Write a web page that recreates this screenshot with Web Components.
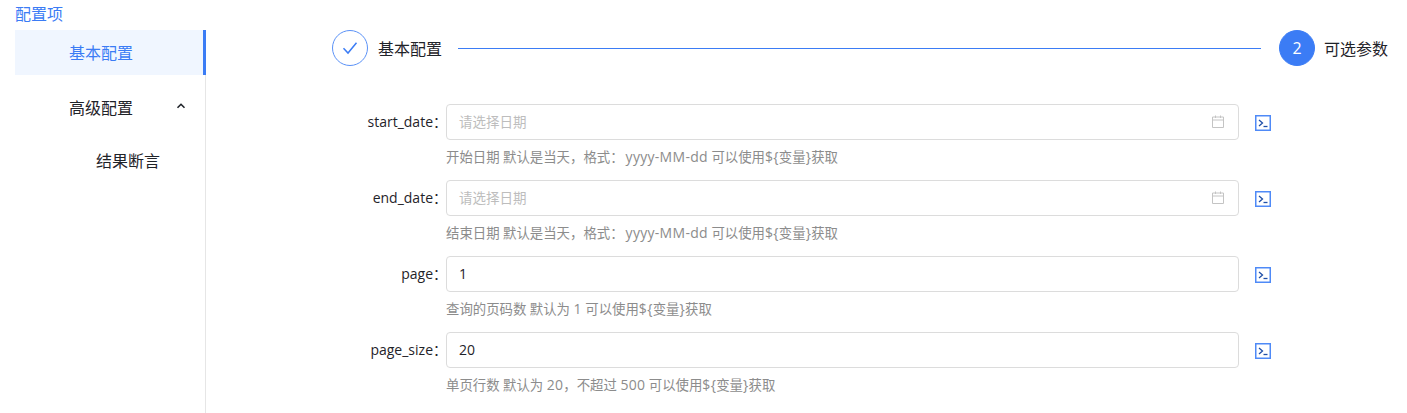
<!DOCTYPE html>
<html lang="zh">
<head>
<meta charset="utf-8">
<title>配置项</title>
<style>
    html, body {
        margin: 0;
        height: 100%;
        background: #fff;
        font-family: "Open Sans", "Noto Sans CJK SC", sans-serif;
        font-size: 14px;
        color: #1f2329;
        overflow: hidden;
    }
</style>
</head>
<body>
<x-config-page>
    <x-side-menu slot="side" heading="配置项">
        <x-menu-item active>基本配置</x-menu-item>
        <x-menu-item arrow>高级配置</x-menu-item>
        <x-menu-item sub>结果断言</x-menu-item>
    </x-side-menu>
    <x-steps>
        <x-step state="done">基本配置</x-step>
        <x-step num="2">可选参数</x-step>
    </x-steps>
    <x-field label="start_date" placeholder="请选择日期" date>开始日期 默认是当天，格式：<span class="gap">yyyy-MM-dd</span> 可以使用<span>${</span>变量<span>}</span>获取</x-field>
    <x-field label="end_date" placeholder="请选择日期" date>结束日期 默认是当天，格式：<span class="gap">yyyy-MM-dd</span> 可以使用<span>${</span>变量<span>}</span>获取</x-field>
    <x-field label="page" value="1">查询的页码数 默认为 <span>1</span> 可以使用<span>${</span>变量<span>}</span>获取</x-field>
    <x-field label="page_size" value="20">单页行数 默认为 <span>20</span>，不超过 <span>500</span> 可以使用<span>${</span>变量<span>}</span>获取</x-field>
</x-config-page>

<script>
const BLUE = '#3b7cf5';

class ConfigPage extends HTMLElement {
    constructor() {
        super();
        this.attachShadow({mode: 'open'});
        this.shadowRoot.innerHTML = `
            <style>
                :host {
                    display: flex;
                    height: 413px;
                    overflow: hidden;
                }

                .side {
                    flex: 0 0 206px;
                }

                .main {
                    flex: 1;
                    min-width: 0;
                    padding: 30px 19px 0 126px;
                }
            </style>
            <div class="side"><slot name="side"></slot></div>
            <div class="main"><slot></slot></div>
        `;
    }
}

class SideMenu extends HTMLElement {
    constructor() {
        super();
        this.attachShadow({mode: 'open'});
        this.shadowRoot.innerHTML = `
            <style>
                :host {
                    display: block;
                    padding-left: 15px;
                }

                h2 {
                    margin: 0;
                    height: 30px;
                    padding-top: 3px;
                    box-sizing: border-box;
                    font-size: 16px;
                    font-weight: 400;
                    line-height: 22px;
                    color: ${BLUE};
                }

                .list {
                    height: 383px;
                    border-right: 1px solid #e6e6e6;
                }
            </style>
            <h2></h2>
            <div class="list"><slot></slot></div>
        `;
        this.shadowRoot.querySelector('h2').textContent = this.getAttribute('heading');
    }
}

class MenuItem extends HTMLElement {
    constructor() {
        super();
        this.attachShadow({mode: 'open'});
        this.shadowRoot.innerHTML = `
            <style>
                :host {
                    display: flex;
                    align-items: center;
                    position: relative;
                    height: 45px;
                    margin-bottom: 8px;
                    padding-left: 54px;
                    color: #1f2329;
                    font-size: 16px;
                    line-height: 22px;
                }

                :host([active]) {
                    background: #f0f6ff;
                    color: ${BLUE};
                    margin-right: -1px;
                    margin-bottom: 10px;
                    box-shadow: inset -3px 0 0 ${BLUE};
                }

                :host([sub]) {
                    padding-left: 81px;
                }

                svg {
                    display: none;
                    position: absolute;
                    left: 161px;
                    top: 17px;
                }

                :host([arrow]) svg {
                    display: block;
                }
            </style>
            <slot></slot>
            <svg width="10" height="8" viewBox="0 0 10 8" fill="none" stroke="#1f2329" stroke-width="1.6">
                <path d="M1.5 5.8 L5 2.3 L8.5 5.8"/>
            </svg>
        `;
    }
}

class Steps extends HTMLElement {
    constructor() {
        super();
        this.attachShadow({mode: 'open'});
        this.shadowRoot.innerHTML = `
            <style>
                :host {
                    display: flex;
                    align-items: center;
                    height: 36px;
                    margin-bottom: 38px;
                }

                .line {
                    flex: 1;
                    height: 1px;
                    margin: 0 18px 0 16px;
                    background: ${BLUE};
                }
            </style>
            <slot name="first"></slot>
            <div class="line"></div>
            <slot name="last"></slot>
        `;
        const [first, last] = this.children;
        first.slot = 'first';
        last.slot = 'last';
    }
}

class Step extends HTMLElement {
    constructor() {
        super();
        this.attachShadow({mode: 'open'});
        const done = this.getAttribute('state') === 'done';
        const num = this.getAttribute('num') || '';
        this.shadowRoot.innerHTML = `
            <style>
                :host {
                    display: flex;
                    align-items: center;
                    color: #1f2329;
                    font-size: 16px;
                }

                .dot {
                    display: flex;
                    align-items: center;
                    justify-content: center;
                    width: 36px;
                    height: 36px;
                    box-sizing: border-box;
                    border-radius: 50%;
                    border: 1px solid ${done ? '#5b92f7' : BLUE};
                    margin-right: ${done ? 10 : 9}px;
                    color: #fff;
                    background: ${done ? '#fff' : BLUE};
                    font-size: 16px;
                }
            </style>
            <span class="dot">${done ? `
                <svg width="16" height="14" viewBox="0 0 16 14" fill="none" stroke="${BLUE}" stroke-width="1.500">
                    <path d="M1.5 7.2 L6 12 L14.5 1.8"/>
                </svg>` : num}</span>
            <slot></slot>
        `;
    }
}

class Field extends HTMLElement {
    constructor() {
        super();
        this.attachShadow({mode: 'open'});
        const placeholder = this.getAttribute('placeholder');
        this.shadowRoot.innerHTML = `
            <style>
                :host {
                    display: grid;
                    grid-template-columns: 114px 793px auto;
                    align-content: start;
                    height: 76px;
                }

                label {
                    height: 36px;
                    line-height: 36px;
                    text-align: right;
                    margin-right: -1px;
                    font-size: 14px;
                    color: #1f2329;
                    white-space: nowrap;
                }

                .box {
                    display: flex;
                    align-items: center;
                    justify-content: space-between;
                    height: 36px;
                    box-sizing: border-box;
                    padding: 0 14px 2px 12px;
                    border: 1px solid #dcdcdc;
                    border-radius: 4px;
                    background: #fff;
                    font-size: 14px;
                    color: #1f2329;
                }

                .placeholder {
                    color: #bdbdbd;
                    font-size: 13.5px;
                }

                .terminal {
                    display: flex;
                    align-items: center;
                    height: 36px;
                    padding: 2px 0 0 16px;
                    box-sizing: border-box;
                }

                .hint {
                    grid-column: 2;
                    margin-top: 7px;
                    font-size: 13.4px;
                    line-height: 20px;
                    color: #8c8c8c;
                    white-space: nowrap;
                }

                /* latin runs sit wider than the CJK around them */
                ::slotted(span) {
                    font-size: 14px;
                    letter-spacing: .3px;
                }

                ::slotted(.gap) {
                    margin-left: 2px;
                }
            </style>
            <label></label>
            <div class="box">
                <span class="${placeholder ? 'placeholder' : 'value'}"></span>
                ${this.hasAttribute('date') ? `
                <svg width="12" height="13" viewBox="0 0 12 13" fill="none" stroke="#c4c4c4" stroke-width="1">
                    <path d="M.5 2h11v10.500h-11z M.5 5h11 M3.500 .5v2.500 M8.500 .5v2.500"/>
                </svg>` : ''}
            </div>
            <div class="terminal">
                <svg width="16" height="16" viewBox="0 0 16 16" fill="none">
                    <rect x=".75" y=".75" width="14.500" height="14.500" stroke="#4f8af7" stroke-width="1.500"/>
                    <path d="M4 5 L7.500 8 L4 11" stroke="#1f4fa8" stroke-width="1.300"/>
                    <path d="M8.500 11.500 H12.500" stroke="#1f4fa8" stroke-width="1.300"/>
                </svg>
            </div>
            <div class="hint"><slot></slot></div>
        `;
        this.shadowRoot.querySelector('label').textContent = this.getAttribute('label') + '：';
        this.shadowRoot.querySelector('.box span').textContent = placeholder || this.getAttribute('value');
    }
}

customElements.define('x-config-page', ConfigPage);
customElements.define('x-side-menu', SideMenu);
customElements.define('x-menu-item', MenuItem);
customElements.define('x-steps', Steps);
customElements.define('x-step', Step);
customElements.define('x-field', Field);
</script>
</body>
</html>
